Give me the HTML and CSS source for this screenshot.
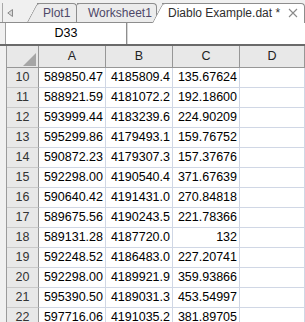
FILE: index.html
```html
<!DOCTYPE html>
<html>
<head>
  <title>Diablo Example.dat</title>
  <link rel="stylesheet" href="styles.css">
</head>
<body>
  <div class="tabbar">
    <div class="tab-scroll">
      <svg width="6" height="8" viewBox="0 0 6 8"><path d="M5.5 0.5 L0.8 4 L5.5 7.5 Z" fill="#d8d8d8" stroke="#8a8a8a" stroke-width="1"/></svg>
    </div>
    <div class="tab tab-plot">Plot1</div>
    <div class="tab tab-ws">Worksheet1</div>
    <div class="tab active">
      <span>Diablo Example.dat *</span>
      <svg class="close" width="10" height="10" viewBox="0 0 10 10"><path d="M1 1 L9 9 M9 1 L1 9" stroke="#8a8a8a" stroke-width="1.1" fill="none"/></svg>
    </div>
  </div>

  <div class="namebar">
    <div class="namebox">D33</div>
    <div class="namesep"></div>
    <div class="formula"></div>
  </div>

  <div class="sheet">
    <div class="grid">
      <div class="hd corner">
        <svg width="13" height="13" viewBox="0 0 13 13"><path d="M13 0 L13 13 L0 13 Z" fill="#a6a6a6"/></svg>
      </div>
      <div class="hd">A</div>
      <div class="hd">B</div>
      <div class="hd">C</div>
      <div class="hd">D</div>

      <div class="rh">10</div><div class="c">589850.47</div><div class="c">4185809.4</div><div class="c">135.67624</div><div class="c"></div>
      <div class="rh">11</div><div class="c">588921.59</div><div class="c">4181072.2</div><div class="c">192.18600</div><div class="c"></div>
      <div class="rh">12</div><div class="c">593999.44</div><div class="c">4183239.6</div><div class="c">224.90209</div><div class="c"></div>
      <div class="rh">13</div><div class="c">595299.86</div><div class="c">4179493.1</div><div class="c">159.76752</div><div class="c"></div>
      <div class="rh">14</div><div class="c">590872.23</div><div class="c">4179307.3</div><div class="c">157.37676</div><div class="c"></div>
      <div class="rh">15</div><div class="c">592298.00</div><div class="c">4190540.4</div><div class="c">371.67639</div><div class="c"></div>
      <div class="rh">16</div><div class="c">590640.42</div><div class="c">4191431.0</div><div class="c">270.84818</div><div class="c"></div>
      <div class="rh">17</div><div class="c">589675.56</div><div class="c">4190243.5</div><div class="c">221.78366</div><div class="c"></div>
      <div class="rh">18</div><div class="c">589131.28</div><div class="c">4187720.0</div><div class="c">132</div><div class="c"></div>
      <div class="rh">19</div><div class="c">592248.52</div><div class="c">4186483.0</div><div class="c">227.20741</div><div class="c"></div>
      <div class="rh">20</div><div class="c">592298.00</div><div class="c">4189921.9</div><div class="c">359.93866</div><div class="c"></div>
      <div class="rh">21</div><div class="c">595390.50</div><div class="c">4189031.3</div><div class="c">453.54997</div><div class="c"></div>
      <div class="rh">22</div><div class="c">597716.06</div><div class="c">4191035.2</div><div class="c">381.89705</div><div class="c"></div>
    </div>
  </div>
</body>
</html>
```

FILE: styles.css
```css
    body {
      margin: 0;
      width: 305px;
      height: 322px;
      overflow: hidden;
      background-color: #f0f0f0;
      color: #000;
      font-family: 'Liberation Sans', Arial, sans-serif;
      font-size: 12.5px;
    }

    /* sheet tabs */
    .tabbar {
      display: flex;
      align-items: flex-end;
      height: 22px;
      border-bottom: 1px solid #8d8d8d;
    }
    .tabbar > div {
      flex-shrink: 0;
    }
    .tab-scroll {
      box-sizing: border-box;
      width: 35px;
      height: 19px;
      margin-left: 2px;
      padding-left: 4px;
      border-left: 1px solid #a8a8a8;
      display: flex;
      align-items: center;
    }
    .tab {
      position: relative;
      box-sizing: border-box;
      height: 19px;
      line-height: 18px;
      background-color: #ececec;
      border-top: 1px solid #8d8d8d;
      border-right: 1px solid #8d8d8d;
      border-top-right-radius: 4px;
      font-size: 12px;
      color: #4e4868;
      white-space: nowrap;
    }
    .tab::before {
      content: "";
      position: absolute;
      left: -10px;
      top: -1px;
      bottom: 0;
      width: 14px;
      background-color: inherit;
      border-left: 1px solid #8d8d8d;
      border-top: 1px solid #8d8d8d;
      border-top-left-radius: 3px;
      transform: skewX(-28deg);
      transform-origin: bottom left;
      z-index: -1;
    }
    .tab-plot {
      width: 40px;
      padding-left: 6px;
      z-index: 3;
    }
    .tab-ws {
      width: 80px;
      padding-left: 11px;
      z-index: 2;
    }
    .tabbar > .tab.active {
      flex: 1 0 0;
      display: flex;
      align-items: center;
      height: 20px;
      margin-left: 5px;
      margin-bottom: -1px;
      padding-left: 6px;
      padding-bottom: 1px;
      background-color: #fff;
      color: #2e2e2e;
      z-index: 4;
    }
    .close {
      display: block;
      margin-left: 8px;
    }

    /* name box row */
    .namebar {
      display: flex;
      height: 21px;
      padding-left: 5px;
      border-bottom: 2px solid #6a6a6a;
    }
    .namebox {
      width: 120px;
      background-color: #fff;
      border-left: 1px solid #a0a0a0;
      text-align: center;
      line-height: 21px;
    }
    .namesep {
      width: 1px;
      background-color: #8e8e8e;
      border-right: 1px solid #d6d6d6;
    }
    .formula {
      flex: 1;
      background-color: #fff;
    }

    /* worksheet grid */
    .sheet {
      padding-left: 6px;
    }
    .grid {
      display: grid;
      grid-template-columns: 32px 67px 67px 67px 1fr;
      grid-template-rows: 22px;
      grid-auto-rows: 20px;
      border-left: 1px solid #9a9a9a;
      background-color: #fff;
    }
    .grid > div {
      box-sizing: border-box;
      white-space: nowrap;
    }
    .hd {
      background-color: #e8e8e8;
      border-right: 1px solid #979797;
      border-bottom: 1px solid #979797;
      text-align: center;
      line-height: 21px;
      color: #222;
    }
    .corner {
      display: flex;
      justify-content: flex-end;
      align-items: flex-end;
      padding: 0 2px 1px 0;
    }
    .corner svg {
      display: block;
    }
    .rh {
      background-color: #e8e8e8;
      border-right: 1px solid #979797;
      border-bottom: 1px solid #c9c9c9;
      text-align: center;
      line-height: 19px;
      color: #333;
    }
    .c {
      border-right: 1px solid #d0d7e5;
      border-bottom: 1px solid #d0d7e5;
      text-align: right;
      padding-right: 2px;
      line-height: 19px;
    }
```
